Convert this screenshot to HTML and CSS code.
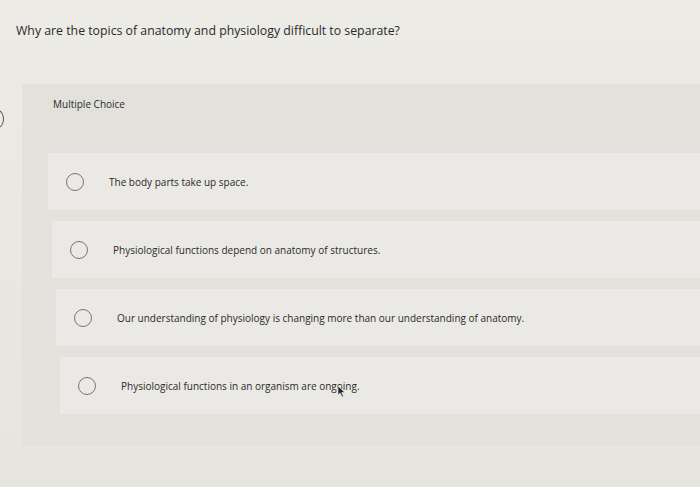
FILE: index.html
```html
<!DOCTYPE html>
<html>
<head>
<meta charset="utf-8">
<link rel="stylesheet" href="styles.css">
</head>
<body>
<div class="page">
  <div class="edge-mark"></div>
  <h1 class="question">Why are the topics of anatomy and physiology difficult to separate?</h1>
  <section class="panel">
    <div class="kind">Multiple Choice</div>
    <ul class="options">
      <li class="option o1"><span class="radio"></span><span class="label">The body parts take up space.</span></li>
      <li class="option o2"><span class="radio"></span><span class="label">Physiological functions depend on anatomy of structures.</span></li>
      <li class="option o3"><span class="radio"></span><span class="label">Our understanding of physiology is changing more than our understanding of anatomy.</span></li>
      <li class="option o4"><span class="radio"></span><span class="label">Physiological functions in an organism are ongoing.</span>
        <svg class="cursor" width="9" height="13" viewBox="0 0 9 13"><path d="M1 1 L1 10 L3.2 8 L5 12 L6.4 11.3 L4.7 7.5 L7.8 7.5 Z" fill="#222" stroke="#eee" stroke-width="0.6"/></svg>
      </li>
    </ul>
  </section>
</div>
</body>
</html>
```
FILE: styles.css
```css
html, body {
  margin: 0;
  padding: 0;
  background: #e9e8e3;
}
.page {
  position: relative;
  width: 700px;
  height: 487px;
  overflow: hidden;
  background: linear-gradient(#ecebe6, #e8e7e2 60%, #e6e5e0);
  font-family: "Open Sans", "Liberation Sans", sans-serif;
  color: #2a2a2a;
}
.edge-mark {
  position: absolute;
  left: -8px;
  top: 110px;
  width: 10px;
  height: 16px;
  border: 1.5px solid #555;
  border-radius: 50%;
}
.question {
  margin: 0;
  padding: 22px 0 0 16px;
  height: 62px;
  box-sizing: border-box;
  font-size: 12.3px;
  font-weight: 400;
}
.panel {
  margin-left: 22px;
  margin-top: 22px;
  height: 361px;
  background: #e2e1dc;
  padding: 13px 0 0 31px;
  box-sizing: border-box;
}
.kind {
  font-size: 10px;
  height: 56px;
}
.options {
  list-style: none;
  margin: 0 0 0 -5px;
  padding: 0;
  display: flex;
  flex-direction: column;
  gap: 11px;
}
.option {
  position: relative;
  display: flex;
  align-items: center;
  height: 57px;
  background: #eae9e5;
  font-size: 10px;
}
.o2 { margin-left: 4px; }
.o3 { margin-left: 8px; }
.o4 { margin-left: 12px; }
.radio {
  width: 16px;
  height: 16px;
  border: 1.2px solid #767676;
  border-radius: 50%;
  margin-left: 18px;
  margin-right: 25px;
  flex: none;
}
.cursor {
  position: absolute;
  left: 277px;
  top: 28px;
}
```
